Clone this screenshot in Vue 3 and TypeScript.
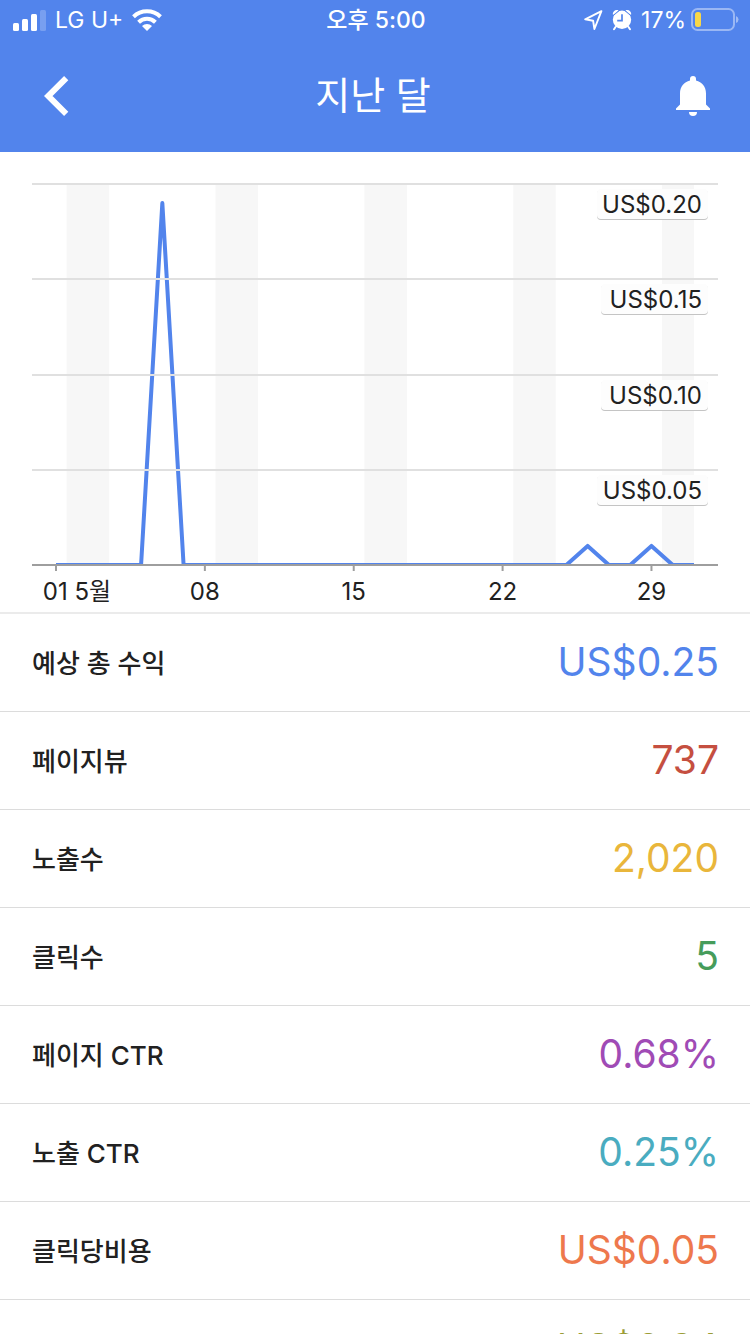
<script setup lang="ts">
interface Metric {
  label: string
  value: string
  color: string
}

const metrics: Metric[] = [
  { label: '예상 총 수익', value: 'US$0.25', color: '#5284ec' },
  { label: '페이지뷰', value: '737', color: '#c54f40' },
  { label: '노출수', value: '2,020', color: '#e9b63b' },
  { label: '클릭수', value: '5', color: '#469c5b' },
  { label: '페이지 CTR', value: '0.68%', color: '#a04bb5' },
  { label: '노출 CTR', value: '0.25%', color: '#4aacc0' },
  { label: '클릭당비용', value: 'US$0.05', color: '#ee784d' },
  { label: '페이지 RPM', value: 'US$0.34', color: '#9c9d37' },
]

// Chart geometry, in viewBox units
const left = 32
const right = 718
const top = 32
const base = 413
const firstDay = 56
const lastDay = 694
const days = 31

const earnings: number[] = Array.from({ length: days }, () => 0)
earnings[5] = 0.19
earnings[25] = 0.01
earnings[28] = 0.01

const dayX = (day: number): number => firstDay + ((day - 1) * (lastDay - firstDay)) / (days - 1)
const valueY = (value: number): number => base - (value / 0.2) * (base - top)

const linePoints = earnings.map((v, i) => `${dayX(i + 1)},${valueY(v)}`).join(' ')

const weekends = [2, 9, 16, 23, 30].map((day) => {
  const x = dayX(day - 0.5)
  return { x, width: Math.min(dayX(day + 1.5), lastDay) - x }
})

const levels = [
  { value: 0.2, text: 'US$0.20', width: 111 },
  { value: 0.15, text: 'US$0.15', width: 107 },
  { value: 0.1, text: 'US$0.10', width: 107 },
  { value: 0.05, text: 'US$0.05', width: 111 },
].map((l) => ({ ...l, y: Math.round(valueY(l.value)) }))

const ticks = [
  { day: 1, text: '01 5월', shift: 21 },
  { day: 8, text: '08', shift: 0 },
  { day: 15, text: '15', shift: 0 },
  { day: 22, text: '22', shift: 0 },
  { day: 29, text: '29', shift: 0 },
].map((t) => ({ ...t, x: dayX(t.day) }))
</script>

<template>
  <div class="screen">
    <header class="top">
      <div class="status">
        <div class="side">
          <svg class="signal" width="33" height="22" viewBox="0 0 33 22" fill="#fff" aria-hidden="true">
            <rect x="0" y="14" width="6" height="8" rx="1.5" />
            <rect x="9" y="10" width="6" height="12" rx="1.5" />
            <rect x="18" y="5" width="6" height="17" rx="1.5" />
            <rect x="27" y="1" width="6" height="21" rx="1.5" opacity=".22" />
          </svg>
          <span class="carrier">LG U+</span>
          <svg width="30" height="22" viewBox="0 0 30 22" aria-hidden="true">
            <g fill="none" stroke="#fff" stroke-width="4">
              <path d="M1.5 7.8 A19.5 19.5 0 0 1 28.5 7.8" />
              <path d="M6.6 13.2 A12 12 0 0 1 23.4 13.2" />
            </g>
            <path d="M10 17 A7.5 7.5 0 0 1 20 17 L15 22 Z" fill="#fff" />
          </svg>
        </div>
        <span class="time">오후 5:00</span>
        <div class="side end">
          <svg width="19" height="22" viewBox="0 0 19 22" aria-hidden="true">
            <path d="M17.4 2.2 L1.2 10.3 L9.1 11.7 L10.4 20 Z" fill="none" stroke="#fff" stroke-width="1.9" stroke-linejoin="round" />
          </svg>
          <svg class="alarm" width="20" height="22" viewBox="0 0 20 22" aria-hidden="true">
            <g fill="#fff">
              <circle cx="10" cy="10.8" r="9.2" />
              <path d="M1 6 C0 3 3.2 -.4 6.6 1.4 Z" />
              <path d="M19 6 C20 3 16.8 -.4 13.4 1.4 Z" />
            </g>
            <path d="M1.2 6.6 L7.2 1.6 M18.8 6.6 L12.8 1.6" stroke="#5284ec" stroke-width="1" />
            <path d="M3.5 18 L2 20.2 M16.5 18 L18 20.2" stroke="#fff" stroke-width="2" stroke-linecap="round" />
            <path d="M10 5.2 V11.6 H5.2" fill="none" stroke="#5284ec" stroke-width="1.7" />
          </svg>
          <span class="percent">17%</span>
          <svg width="49" height="24" viewBox="0 0 49 24" aria-hidden="true">
            <rect x="2" y="1" width="42" height="21" rx="5.5" fill="none" stroke="#fff" stroke-opacity=".42" stroke-width="2" />
            <rect x="5" y="4" width="6" height="15" rx="2.5" fill="#f8d748" />
            <path d="M46 8 Q48.5 9 48.5 11.5 T46 15 Z" fill="#fff" fill-opacity=".45" />
          </svg>
        </div>
      </div>
      <nav class="nav">
        <button type="button" class="icon" aria-label="뒤로">
          <svg width="26" height="40" viewBox="0 0 26 40" aria-hidden="true">
            <path d="M22.2 2.2 L4.2 20 L22.2 37.8" fill="none" stroke="#fff" stroke-width="6" />
          </svg>
        </button>
        <h1>지난 달</h1>
        <button type="button" class="icon" aria-label="알림">
          <svg width="34" height="40" viewBox="0 0 34 40" fill="#fff" aria-hidden="true">
            <path d="M14 4.6 V3 A3 3 0 0 1 20 3 V4.6 C26 6 30 11 30 17.5 V28.5 L34 32.5 V34 H0 V32.5 L4 28.5 V17.5 C4 11 8 6 14 4.6 Z" />
            <path d="M13 36 H21 A4 4 0 0 1 13 36 Z" />
          </svg>
        </button>
      </nav>
    </header>

    <svg class="chart" viewBox="0 0 750 460" role="img" aria-label="일별 예상 수익">
      <defs>
        <clipPath id="plot">
          <rect :x="left" :y="top" :width="right - left" :height="base - top" />
        </clipPath>
      </defs>
      <rect v-for="w in weekends" :key="w.x" class="weekend" :x="w.x" :y="top" :width="w.width" :height="base - top" />
      <polyline class="line" :points="linePoints" clip-path="url(#plot)" />
      <line v-for="l in levels" :key="l.text" class="grid" :x1="left" :x2="right" :y1="l.y" :y2="l.y" />
      <line class="axis" :x1="left" :x2="right" :y1="base" :y2="base" />
      <line v-for="t in ticks" :key="t.day" class="axis" :x1="t.x" :x2="t.x" :y1="base" :y2="base + 6" />
      <g v-for="l in levels" :key="l.value">
        <rect class="chip-edge" :x="708 - l.width" :y="l.y + 6" :width="l.width" height="30" rx="4" />
        <rect class="chip" :x="708 - l.width" :y="l.y + 5" :width="l.width" height="30" rx="4" />
        <text class="chart-text" x="702" :y="l.y + 29" text-anchor="end">{{ l.text }}</text>
      </g>
      <text v-for="t in ticks" :key="t.text" class="chart-text" :x="t.x + t.shift" y="448" text-anchor="middle">{{ t.text }}</text>
    </svg>

    <dl class="metrics">
      <div v-for="m in metrics" :key="m.label" class="row">
        <dt>{{ m.label }}</dt>
        <dd :style="{ color: m.color }">{{ m.value }}</dd>
      </div>
    </dl>
  </div>
</template>

<style>
body {
  margin: 0;
  background: #fff;
}
</style>

<style scoped>
.screen {
  display: flex;
  flex-direction: column;
  height: 100vh;
  overflow: hidden;
  background: #fff;
  color: #212121;
  font-family: Inter, "Noto Sans CJK KR", sans-serif;
}

.top {
  flex: none;
  background: #5284ec;
  color: #fff;
}

.status {
  display: grid;
  grid-template-columns: 1fr auto 1fr;
  align-items: center;
  height: 40px;
  padding: 0 11px 0 13px;
  font-size: 23px;
  line-height: 40px;
}

.side {
  display: flex;
  align-items: center;
  gap: 9px;
}

.end {
  justify-content: flex-end;
}

.time {
  font-weight: 500;
}

.end .percent {
  margin-right: -5px;
}

.nav {
  display: flex;
  align-items: center;
  justify-content: space-between;
  height: 112px;
  padding: 0 40px 0 44px;
}

h1 {
  margin: 0;
  padding-bottom: 2px;
  font-size: 38px;
  font-weight: 400;
  line-height: 56px;
}

.icon {
  display: flex;
  padding: 0;
  border: 0;
  background: none;
  cursor: pointer;
}

.chart {
  flex: none;
  display: block;
  width: 100%;
  border-bottom: 2px solid #ebebeb;
}

.weekend {
  fill: #f7f7f7;
}

.line {
  fill: none;
  stroke: #5284ec;
  stroke-width: 4;
  stroke-linejoin: round;
}

.grid {
  stroke: #e0e0e0;
  stroke-width: 2;
}

.axis {
  stroke: #9e9e9e;
  stroke-width: 2;
}

.chip-edge {
  fill: #c4c4c4;
}

.chip {
  fill: #fdfdfd;
}

.chart-text {
  fill: #212121;
  font-size: 24px;
}

.metrics {
  flex: 1;
  min-height: 0;
  margin: 0;
  overflow: hidden;
}

.row {
  display: flex;
  align-items: center;
  justify-content: space-between;
  box-sizing: border-box;
  height: 98px;
  padding: 0 31px 2px 32px;
  border-bottom: 1px solid #dcdcdc;
}

dt {
  font-size: 26px;
  font-weight: 500;
}

dd {
  margin: 0;
  font-size: 39px;
  line-height: 48px;
}
</style>
